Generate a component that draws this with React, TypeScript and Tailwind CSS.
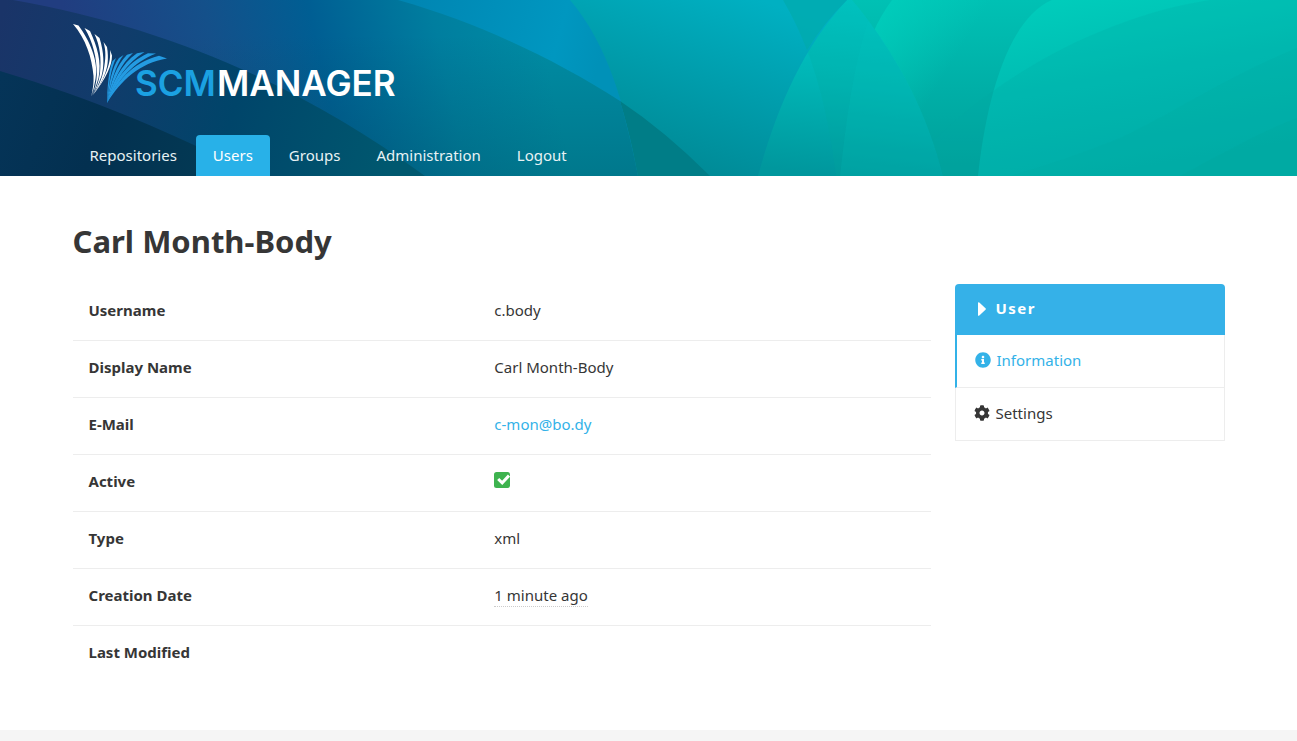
import React from "react";
import { FaCog, FaInfoCircle } from "react-icons/fa";

const navItems = ["Repositories", "Users", "Groups", "Administration", "Logout"];

function HeaderArt() {
  return (
    <svg
      className="absolute inset-0 h-full w-full"
      viewBox="0 0 1297 176"
      preserveAspectRatio="none"
      aria-hidden="true"
    >
      <defs>
        <linearGradient id="base" x1="0" y1="0" x2="0" y2="1">
          <stop offset="0" stopColor="#00c1b4" />
          <stop offset="0.5" stopColor="#00afa7" />
          <stop offset="1" stopColor="#009f9a" />
        </linearGradient>
        <linearGradient id="petalH" gradientUnits="userSpaceOnUse" x1="880" y1="0" x2="960" y2="50">
          <stop offset="0" stopColor="#00d0bd" stopOpacity="0.8" />
          <stop offset="1" stopColor="#00d0bd" stopOpacity="0" />
        </linearGradient>
        <linearGradient id="petalI" gradientUnits="userSpaceOnUse" x1="1060" y1="0" x2="1090" y2="176">
          <stop offset="0" stopColor="#00ccbb" />
          <stop offset="0.5" stopColor="#00bbb2" />
          <stop offset="1" stopColor="#00afaa" />
        </linearGradient>
        <linearGradient id="petalG" gradientUnits="userSpaceOnUse" x1="860" y1="0" x2="840" y2="176">
          <stop offset="0" stopColor="#00c8c8" />
          <stop offset="0.45" stopColor="#00b6b6" />
          <stop offset="1" stopColor="#00979d" />
        </linearGradient>
        <linearGradient id="mid" gradientUnits="userSpaceOnUse" x1="760" y1="0" x2="700" y2="176">
          <stop offset="0" stopColor="#00b0c2" />
          <stop offset="1" stopColor="#008a96" />
        </linearGradient>
        <linearGradient id="blue" gradientUnits="userSpaceOnUse" x1="380" y1="0" x2="600" y2="60">
          <stop offset="0" stopColor="#0082b0" />
          <stop offset="0.8" stopColor="#0097c0" />
          <stop offset="1" stopColor="#0091b8" />
        </linearGradient>
        <linearGradient id="lower" gradientUnits="userSpaceOnUse" x1="70" y1="40" x2="520" y2="-60">
          <stop offset="0" stopColor="#213d80" />
          <stop offset="0.3" stopColor="#14508a" />
          <stop offset="0.52" stopColor="#005e93" />
          <stop offset="0.78" stopColor="#007e9f" />
          <stop offset="1" stopColor="#008ca4" />
        </linearGradient>
        <linearGradient id="lowerShade" x1="0" y1="0" x2="0" y2="1">
          <stop offset="0.2" stopColor="#004a55" stopOpacity="0" />
          <stop offset="1" stopColor="#004a55" stopOpacity="0.3" />
        </linearGradient>
        <linearGradient id="deep" gradientUnits="userSpaceOnUse" x1="0" y1="20" x2="400" y2="130">
          <stop offset="0" stopColor="#1a3468" />
          <stop offset="0.3" stopColor="#103c6b" />
          <stop offset="0.6" stopColor="#00456a" />
          <stop offset="1" stopColor="#00586f" />
        </linearGradient>
        <linearGradient id="deepest" gradientUnits="userSpaceOnUse" x1="0" y1="80" x2="260" y2="176">
          <stop offset="0" stopColor="#053458" />
          <stop offset="0.4" stopColor="#033050" />
          <stop offset="1" stopColor="#033e56" />
        </linearGradient>
      </defs>
      <rect width="1297" height="176" fill="url(#base)" />
      <path d="M892 0C862 40 850 100 840 176H1297V0Z" fill="url(#petalH)" />
      <path d="M1052 0C1005 20 985 110 978 176H1297V0Z" fill="url(#petalI)" />
      <path d="M1210 0C1110 15 985 75 900 176H1297V0Z" fill="#00a8a6" fillOpacity="0.22" />
      <path d="M1297 48C1230 75 1170 115 1120 138C1060 162 1030 170 1010 176H1297Z" fill="#00a8a0" fillOpacity="0.2" />
      <path d="M1297 118C1260 132 1220 155 1180 176H1297Z" fill="#00a49c" fillOpacity="0.2" />
      <path d="M852 0C890 45 925 105 943 176H740V0Z" fill="url(#petalG)" />
      <path d="M783 0C813 50 828 110 836 176H943C925 105 890 45 852 0Z" fill="#00a89a" fillOpacity="0.2" />
      <path d="M868 21C853 68 846 122 840 176H943C927 113 899 59 868 21Z" fill="#00c9c0" fillOpacity="0.15" />
      <path d="M847 0C800 50 775 115 758 176H560V0Z" fill="url(#mid)" />
      <path d="M783 0H847Q823 24 807 50Q797 24 783 0Z" fill="#00abab" fillOpacity="0.65" />
      <path d="M570 0C608 45 625 105 638 176H0V0Z" fill="url(#blue)" />
      <path d="M398 0C482 24 556 60 620 101Q630 135 638 176H0V0Z" fill="url(#lower)" />
      <path d="M398 0C482 24 556 60 620 101Q630 135 638 176H0V0Z" fill="url(#lowerShade)" />
      <path d="M620 101C630 135 634 155 638 176H710Q665 131 620 101Z" fill="#007d87" />
      <path d="M13 0C170 28 300 85 425 176H0V0Z" fill="url(#deep)" />
      <path d="M0 71C90 98 180 135 255 176H0Z" fill="url(#deepest)" />
    </svg>
  );
}

function Logo() {
  return (
    <svg className="block h-20 w-[330px]" viewBox="0 0 330 80" role="img" aria-label="SCM-Manager">
      <g fill="#fff">
        <path d="M0 0L5.5 1.5C17 17 26 38 22.5 55Q21 65 18 73Q21 62 20.5 52C19 34 13 15 0 0Z" />
        <path d="M11.5 4L17 7C24 22 29 38 25.5 54Q23 64 18.5 72Q23.5 62 23.8 51C24 34 20 18 11.5 4Z" />
        <path d="M21.5 10L26.5 14C31 28 31.5 42 28.5 52Q25 63 19 72Q25.5 61 27 49C28.5 34 27 22 21.5 10Z" />
        <path d="M30.5 18L34 23C36 35 34.5 44 31.5 51Q27 62 19.5 71.5Q28 59 30.5 47C33 34 33 27 30.5 18Z" />
        <path d="M37 26L39 31.5C39 42 33 54 20.5 70.5Q30 57 34 46C36.8 38 37.5 33 37 26Z" />
      </g>
      <g fill="#249be2">
        <path d="M34 79C34.5 62 35.5 47 39.5 37L43 34C38 45 36 58 34 79Z" />
        <path d="M34 79C36 58 39 43.5 46 34L50.5 31C42.5 42 38 57 34 79Z" />
        <path d="M34 79C37.5 58 43.5 41 54 30.8L60 29C48 40 40 57 34 79Z" />
        <path d="M34 79C39 58 48.5 40 64 29.3L71.5 28C53.5 39 42.5 56 34 79Z" />
        <path d="M34 79C40.5 58 53 39.5 75 29.3L83 29.5C60 38.5 45 56 34 79Z" />
        <path d="M34 79C42.5 59 58.5 39 86 31.8L94 34.5C67 39 48 56 34 79Z" />
      </g>
      <g fontFamily="Inter, sans-serif" fontSize="35" fontWeight="600">
        <text x="62" y="72" fill="#1ba1e2">SCM</text>
        <text x="144" y="72" fill="#fff">MANAGER</text>
      </g>
    </svg>
  );
}

function ActiveIcon() {
  return (
    <svg className="block size-4" viewBox="0 0 16 16" role="img" aria-label="Active">
      <rect width="16" height="16" rx="2.5" fill="#3eb34f" />
      <path d="M4.2 7L8.2 10.8L15 3.6" fill="none" stroke="#fff" strokeWidth="3" />
    </svg>
  );
}

function Caret() {
  return (
    <svg className="block h-3.5 w-2" viewBox="0 0 8 14" aria-hidden="true">
      <path d="M0 1Q0 -0.5 1.3 0.6L7.5 6.3Q8.2 7 7.5 7.7L1.3 13.4Q0 14.5 0 13Z" fill="currentColor" />
    </svg>
  );
}

const rows: { label: string; value: React.ReactNode }[] = [
  { label: "Username", value: "c.body" },
  { label: "Display Name", value: "Carl Month-Body" },
  {
    label: "E-Mail",
    value: (
      <a href="mailto:c-mon@bo.dy" className="text-[#33b2e8]">
        c-mon@bo.dy
      </a>
    ),
  },
  {
    label: "Active",
    value: (
      <span className="flex h-6 items-start pt-[3px]">
        <ActiveIcon />
      </span>
    ),
  },
  { label: "Type", value: "xml" },
  {
    label: "Creation Date",
    value: <time className="border-b border-dotted border-[#ccc] pb-px">1 minute ago</time>,
  },
  { label: "Last Modified", value: "" },
];

export default function App() {
  return (
    <div className="flex min-h-screen flex-col bg-white font-['Noto_Sans',sans-serif] text-base text-[#363636]">
      <header className="relative bg-[#00a8a8]">
        <HeaderArt />
        <div className="relative mx-auto max-w-6xl pt-6">
          <Logo />
          <nav className="mt-[31px] flex gap-0.5 text-[15px]" aria-label="Main">
            {navItems.map((item) => (
              <a
                key={item}
                href="#"
                className={
                  item === "Users"
                    ? "rounded-t bg-[#28b1e8] px-[17px] py-2 leading-[25px] text-white"
                    : "px-[17px] py-2 leading-[25px] text-[#e8f2f4]"
                }
              >
                {item}
              </a>
            ))}
          </nav>
        </div>
      </header>

      <main className="mx-auto w-full max-w-6xl grow py-12">
        <h1 className="mb-[26px] text-[31px] leading-[34px] font-bold">Carl Month-Body</h1>
        <div className="flex items-start gap-6">
          <table className="min-w-0 grow table-fixed border-separate border-spacing-0 text-[15px] leading-6">
            <tbody>
              {rows.map((row) => (
                <tr key={row.label} className="group">
                  <th
                    scope="row"
                    className="w-[47.3%] border-b border-[#ededed] px-4 pt-3.5 pb-[18px] text-left align-top font-bold group-last:border-b-0"
                  >
                    {row.label}
                  </th>
                  <td className="border-b border-[#ededed] px-4 pt-3.5 pb-[18px] align-top group-last:border-b-0">
                    {row.value}
                  </td>
                </tr>
              ))}
            </tbody>
          </table>

          <aside className="w-[270px] shrink-0 text-[15px]">
            <p className="flex h-[51px] items-center gap-2.5 rounded-t bg-[#35b1e8] px-[23px] pb-0.5 font-bold tracking-widest text-white">
              <Caret />
              User
            </p>
            <ul>
              <li>
                <a
                  href="#"
                  className="flex h-[53px] items-center gap-1.5 border-r border-b border-l-2 border-r-[#ededed] border-b-[#ededed] border-l-[#33b2e8] px-[18px] pb-0.5 text-[#33b2e8]"
                >
                  <FaInfoCircle className="size-4" />
                  Information
                </a>
              </li>
              <li>
                <a
                  href="#"
                  className="flex h-[53px] items-center gap-1.5 border-x border-b border-[#ededed] px-[18px] pb-0.5"
                >
                  <FaCog className="size-4" />
                  Settings
                </a>
              </li>
            </ul>
          </aside>
        </div>
      </main>

      <footer className="h-[11px] bg-[#f5f5f5]" />
    </div>
  );
}
